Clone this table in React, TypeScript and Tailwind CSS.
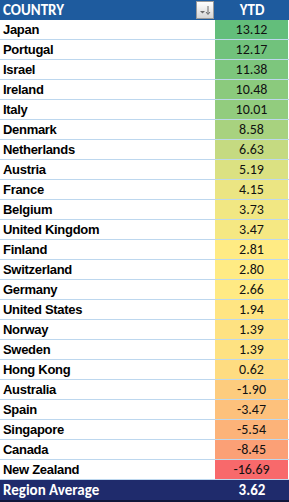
import React from "react";

const data: [string, number][] = [
  ["Japan", 13.12],
  ["Portugal", 12.17],
  ["Israel", 11.38],
  ["Ireland", 10.48],
  ["Italy", 10.01],
  ["Denmark", 8.58],
  ["Netherlands", 6.63],
  ["Austria", 5.19],
  ["France", 4.15],
  ["Belgium", 3.73],
  ["United Kingdom", 3.47],
  ["Finland", 2.81],
  ["Switzerland", 2.8],
  ["Germany", 2.66],
  ["United States", 1.94],
  ["Norway", 1.39],
  ["Sweden", 1.39],
  ["Hong Kong", 0.62],
  ["Australia", -1.9],
  ["Spain", -3.47],
  ["Singapore", -5.54],
  ["Canada", -8.45],
  ["New Zealand", -16.69],
];

const G = [99, 190, 123];
const Y = [255, 235, 132];
const R = [248, 105, 107];

function mix(a: number[], b: number[], t: number) {
  const c = a.map((v, i) => Math.round(v + (b[i] - v) * t));
  return `rgb(${c[0]},${c[1]},${c[2]})`;
}

function colorFor(v: number) {
  const max = 13.12;
  const min = -16.69;
  const mid = 2.8;
  if (v >= mid) return mix(Y, G, (v - mid) / (max - mid));
  return mix(Y, R, (mid - v) / (mid - min));
}

function FilterButton() {
  return (
    <div className="w-[18px] h-[18px] mr-[1px] border border-[#9a9a9a] bg-gradient-to-b from-white to-[#d6d6d6] flex items-center justify-center">
      <svg width="14" height="12" viewBox="0 0 14 12">
        <path d="M2 7 L7 7 L4.5 9.5 Z" fill="#6b6b6b" />
        <path d="M10 2 L10 10" stroke="#6b6b6b" strokeWidth="1" />
        <path d="M8 8 L10 10.5 L12 8" stroke="#6b6b6b" strokeWidth="1" fill="none" />
      </svg>
    </div>
  );
}

export default function App() {
  return (
    <div className="w-[289px] bg-white font-['Carlito','Lato','Liberation_Sans',sans-serif]">
      <div className="flex h-[20px] bg-[#1e5b9e] text-white text-[15px] font-bold">
        <div className="w-[215px] flex items-center justify-between pl-[3px]">
          <span>COUNTRY</span>
          <FilterButton />
        </div>
        <div className="flex-1 flex items-center justify-center">YTD</div>
      </div>
      {data.map(([name, v]) => (
        <div key={name} className="flex h-[20px] border-b border-[#bdd7ee]">
          <div className="w-[215px] flex items-center pl-[3px] text-[13px] font-bold text-black tracking-[-0.3px] font-['Tahoma','Liberation_Sans','DejaVu_Sans',sans-serif]">
            {name}
          </div>
          <div
            className="flex-1 mr-[1px] flex items-center justify-center text-[14px] text-[#111]"
            style={{ backgroundColor: colorFor(v) }}
          >
            {v.toFixed(2)}
          </div>
        </div>
      ))}
      <div className="flex h-[22px] bg-[#1f2b6c] text-white text-[15px] font-bold border-b-2 border-[#10163a]">
        <div className="w-[215px] flex items-center pl-[3px]">Region Average</div>
        <div className="flex-1 flex items-center justify-center">3.62</div>
      </div>
    </div>
  );
}
